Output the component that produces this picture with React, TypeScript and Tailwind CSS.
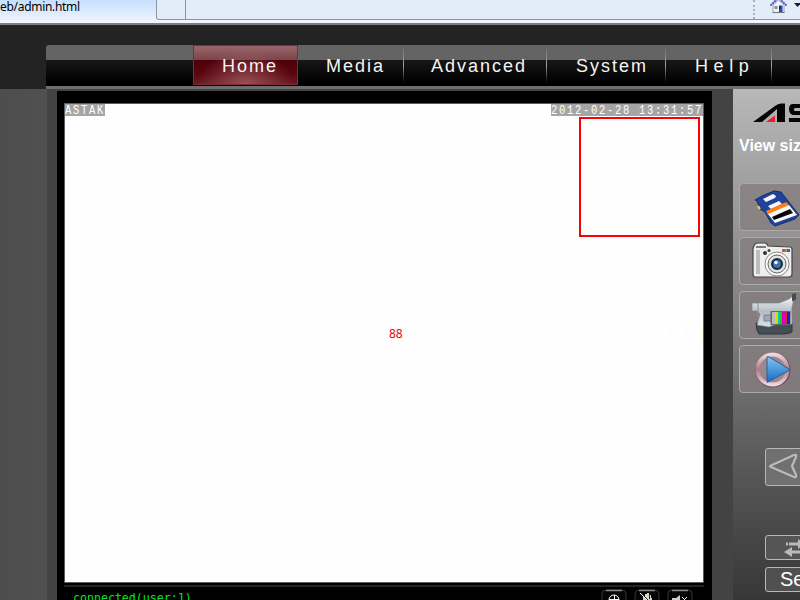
import React from "react";

const navItems = [
  { label: "Home", box: "w-[105px] pl-[29px] tracking-[2px]", active: true },
  { label: "Media", box: "w-[106px] pl-[28px] tracking-[2px]", active: false },
  { label: "Advanced", box: "w-[143px] pl-[27px] tracking-[2px]", active: false },
  { label: "System", box: "w-[119px] pl-[29px] tracking-[2px]", active: false },
  { label: "Help", box: "w-[106px] pl-[29px] tracking-[5.6px]", active: false },
];

function HomeIcon() {
  return (
    <svg className="ml-[15px] h-[14px] w-[17px] shrink-0" viewBox="0 0 17 14">
      <path d="M3 5 8.5 0 14 5v7.5H3z" fill="#eef0f5" stroke="#9aa3b5" />
      <path d="M.5 5.5 7-.8M16.5 5.5 10-.8" stroke="#3542c5" strokeWidth="1.6" strokeDasharray="2 .6" fill="none" />
      <path d="M2.5 12.5h12" stroke="#777" />
      <rect x="4.5" y="6" width="3" height="3" fill="#8b8f98" />
      <rect x="9" y="5.5" width="3.5" height="6.5" fill="#1c4fae" />
      <rect x="9" y="6" width="1.5" height="3" fill="#0a2460" />
    </svg>
  );
}

function BrowserBar() {
  return (
    <header className="flex h-[25px] shrink-0 flex-col border-b-2 border-[#7b7d80] bg-[#f2f5fb]">
      <div className="flex h-[20px]">
        <div className="h-[22px] w-[156px] shrink-0 bg-linear-to-b from-[#c6dffc] to-[#f0f4fc] font-['Noto_Sans',sans-serif] text-[12px] leading-[14px] text-black">
          <span className="block whitespace-nowrap tracking-[-0.3px]">eb/admin.html</span>
        </div>
        <div className="w-[30px] shrink-0 rounded-bl-[3px] border-r border-b border-l border-[#8c93a8] bg-[#e1edf9]" />
        <div className="flex min-w-0 flex-1 border-b border-[#8c93a8] bg-[#e1edf9]">
          <div className="ml-[567px] w-[2px] shrink-0 border-l-2 border-dotted border-[#a9b0bc]" />
          <HomeIcon />
          <svg className="mt-[3px] ml-[7px] h-[4px] w-[7px] shrink-0" viewBox="0 0 7 4"><path d="M0 0h7L3.5 4z" fill="#222" /></svg>
        </div>
      </div>
    </header>
  );
}

function Divider() {
  return <i className="h-[38px] w-px bg-linear-to-b from-[#666]/0 via-[#a4a4a4] to-[#222]/0" />;
}

function NavBar() {
  return (
    <nav className="ml-[46px] flex h-[44px] shrink-0 rounded-tl-[3px] border-b-[3px] border-[#6e6e6e] bg-[linear-gradient(#646464_0_15px,#171717_15px,#000_38px)] font-['Liberation_Sans',Arial,sans-serif] text-[18px] text-[#f4f4f4]">
      <div className="w-[147px]" />
      {navItems.map((item) => (
        <div key={item.label} className={`flex h-[40px] shrink-0 items-start justify-between whitespace-nowrap ${item.box} ${item.active ? "border border-[#812b35] bg-[radial-gradient(ellipse_at_bottom,#b06a70aa_0,#7d303600_65%),linear-gradient(#9b666b_0,#79454a_14px,#4d0009_14px,#5a0610_28px,#6d1c24_39px)]" : ""}`}>
          <span className={item.active ? "-ml-px pt-[9px] leading-[22px]" : "pt-[10px] leading-[22px]"}>{item.label}</span>
          {!item.active && <Divider />}
        </div>
      ))}
      <div className="flex-1" />
    </nav>
  );
}

function StatusBar() {
  return (
    <div className="mt-[2px] flex h-[15px] w-[640px] items-start border-t-2 border-[#242424]">
      <span className="ml-[9px] pt-[4px] font-['DejaVu_Sans_Mono',monospace] text-[11.6px] leading-[14px] text-[#00e817]">connected(user:1)</span>
      <div className="ml-auto flex gap-[7px] pt-[2px] pr-[11px]">
        <svg className="h-[13px] w-[26px]" viewBox="0 0 26 13">
          <path d="M1 13V5q0-4 4-4h16q4 0 4 4v8" fill="#050505" stroke="#353535" />
          <path d="M5 1.5h16" stroke="#888" strokeWidth="1.5" />
          <circle cx="13" cy="11" r="5" fill="none" stroke="#fff" /><path d="M13.5 6v7M8 10.5h10" stroke="#fff" />
        </svg>
        <svg className="h-[13px] w-[26px]" viewBox="0 0 26 13">
          <path d="M1 13V5q0-4 4-4h16q4 0 4 4v8" fill="#050505" stroke="#353535" />
          <path d="M5 1.5h16" stroke="#888" strokeWidth="1.5" />
          <path d="M9 13V7h2V5h2v3-4h2v4-2h2v3h1v4z" fill="#d9d9cb" /><path d="m6 4 9 9" stroke="#fff" /><path d="m7 4 9 9M15.5 6v4" stroke="#222" />
        </svg>
        <svg className="h-[13px] w-[26px]" viewBox="0 0 26 13">
          <path d="M1 13V5q0-4 4-4h16q4 0 4 4v8" fill="#050505" stroke="#353535" />
          <path d="M5 1.5h16" stroke="#888" strokeWidth="1.5" />
          <path d="M5 9h4l4-3v7H5z" fill="#ccc" /><path d="m15 8 5 5m0-5-5 5" stroke="#fff" />
        </svg>
      </div>
    </div>
  );
}

function Caption({ children, width }: { children: string; width: string }) {
  return (
    <div className={`h-[12px] overflow-hidden bg-[#a5a5a5] ${width}`}>
      <span className="block origin-top scale-y-[1.28] leading-[10px] whitespace-nowrap">{children}</span>
    </div>
  );
}

function VideoPanel() {
  return (
    <section className="mt-[2px] ml-[10px] h-[509px] w-[655px] shrink-0 bg-black pt-[12px] pl-[7px]">
      <div className="relative h-[480px] w-[640px] border border-[#5c5c5c] bg-[#fefefe]">
        <div className="flex h-[13px] justify-between font-['Liberation_Mono',monospace] text-[10.5px] tracking-[1.7px] text-white">
          <Caption width="w-[40px]">ASTAK</Caption>
          <Caption width="w-[152px]">2012-02-28 13:31:57</Caption>
        </div>
        <div className="mr-[3px] ml-auto h-[120px] w-[121px] border-2 border-[#fb0007]" />
        <div className="mt-[88px] ml-[324px] font-['Noto_Sans',sans-serif] text-[12px] leading-[18px] text-[#f00008]">88</div>
        <div className="absolute top-[223px] right-0 flex h-[15px] gap-[14px]">
          <i className="w-[2px] bg-[#fffeee]" /><i className="w-[2px] bg-[#fffeea]" /><i className="w-[2px] bg-[#fffce0]" />
        </div>
      </div>
      <StatusBar />
    </section>
  );
}

function AstakLogo() {
  return (
    <svg className="ml-[20px] h-[20px] w-[47px]" viewBox="0 0 47 20">
      <path d="M0 19 22 3Q25 .5 28 .5h4V19h-8V6L9 19z" fill="#050505" />
      <path d="M13 19 22 12.5V19z" fill="#f4192b" />
      <path d="M50 1H40q-4 0-4 5t4 6h10v3H36v4h14V8h-8q-1 0-1-1.500T42 5h8z" fill="#050505" />
    </svg>
  );
}

function SdCard() {
  return (
    <svg className="h-full w-full" viewBox="0 0 60 46">
      <path d="m14 16 7-4 12-5 7 1 18 23-4 4-20 7-4-3-6-11-5-3-3-8z" fill="#20429a" stroke="#132f70" />
      <path d="m22 15 10-5 3 2-1 2-9 4zM27 22l11-5 3 3-11 5z" fill="#f8f9ff" />
      <path d="m25 27 20-9 3 3-21 10z" fill="#ff7d11" />
      <path d="m27 30 21-9 8 10-22 8z" fill="#f8f8f8" />
      <path d="m31 33 18-8 3 4-19 7z" fill="#070707" />
      <path d="m17 22 2 3" stroke="#f4d16d" strokeWidth="2" />
    </svg>
  );
}

function PhotoCamera() {
  return (
    <svg className="h-full w-full" viewBox="2 0 60 46">
      <path d="M14 10l2-4q1-1 3-1h7q2 0 3 3l22 1q2 0 2 2v25q0 3-3 3H16q-2 0-2-3z" fill="#eeeeed" stroke="#444" strokeWidth="1.2" />
      <path d="M17 12v24h4V12z" fill="#bdbdbd" />
      <path d="M17 9h10" stroke="#555" strokeWidth="1.3" />
      <path d="M43 11h3v3h-3z" fill="#e04a36" /><path d="M46 11h2v3h-2z" fill="#3ac551" /><path d="M48 11h3v3h-3z" fill="#6743dd" />
      <circle cx="26" cy="15" r="2" fill="#333" /><circle cx="30" cy="12.500" r="1.500" fill="#444" />
      <circle cx="38" cy="26" r="12" fill="#fafafa" stroke="#888" />
      <circle cx="38" cy="26" r="9" fill="#e3e3e3" stroke="#666" />
      <circle cx="38" cy="26" r="5" fill="#3e6fa6" stroke="#142944" strokeWidth="2" />
      <circle cx="37" cy="24.500" r="1.800" fill="#ecf6fb" />
    </svg>
  );
}

function VideoCamera() {
  return (
    <svg className="h-full w-full" viewBox="2 -2 60 46">
      <defs><linearGradient id="cameraBody" x2="0" y2="1"><stop stopColor="#f7fafd" /><stop offset=".5" stopColor="#b7bbc4" /><stop offset="1" stopColor="#dde4e9" /></linearGradient></defs>
      <path d="M17 29h36v9q-3 2-10 2H20q-3-4-3-11z" fill="#454d55" stroke="#33373d" />
      <path d="M13 9h27l10-4 4-3v8l-1 3v17l-18 1-5 2-12-2 3-11-3-3h-5z" fill="url(#cameraBody)" stroke="#7d848d" strokeWidth=".7" />
      <path d="M19 9v13" stroke="#8b9099" /><path d="M22 11h23" stroke="#c9ced5" />
      <path d="M25 21h7v6h-7z" fill="#a3a9b3" stroke="#7b828e" />
      <path d="M53 2V0l4-1v7l-4 1z" fill="#444b55" />
      <rect x="31.500" y="17" width="20" height="14" fill="#666" />
      <path d="M33 18h3v12h-3z" fill="#bbb" /><path d="M36 18h3v12h-3z" fill="#dcd800" /><path d="M39 18h2v12h-2z" fill="#00c6ce" />
      <path d="M41 18h2v12h-2z" fill="#16c925" /><path d="M43 18h3v12h-3z" fill="#d900bc" /><path d="M46 18h2v12h-2z" fill="#e02428" /><path d="M48 18h3v12h-3z" fill="#1721d5" />
    </svg>
  );
}

function PlayIcon() {
  return (
    <svg className="h-full w-full" viewBox="1 0 60 46">
      <defs>
        <linearGradient id="playFill" x2="0" y2="1"><stop stopColor="#8dc5ef" /><stop offset=".5" stopColor="#4a98dc" /><stop offset="1" stopColor="#1c6bbb" /></linearGradient>
        <linearGradient id="playRing" x2="0" y2="1"><stop stopColor="#f1d5dd" /><stop offset=".5" stopColor="#b07988" /><stop offset="1" stopColor="#f2d2dc" /></linearGradient>
      </defs>
      <circle cx="33" cy="24" r="16" fill="none" stroke="#665259" strokeWidth="3" />
      <circle cx="32.500" cy="23.500" r="15" fill="#98898c" stroke="url(#playRing)" strokeWidth="3.800" />
      <path d="M27 11q0-1 2 0l20 12q1 1-1 2L28 36q-1 1-1-1z" fill="url(#playFill)" stroke="#245f9c" />
    </svg>
  );
}

function SideButton({ children }: { children: React.ReactNode }) {
  return <button className="h-[48px] w-[64px] overflow-hidden rounded-[4px] border border-[#aaa] bg-[#857d7d]/80">{children}</button>;
}

function Sidebar() {
  return (
    <aside className="ml-[21px] h-[511px] w-[67px] shrink-0 overflow-hidden bg-linear-to-b from-[#b8b8b8] via-[#797979] to-[#373737] font-['Liberation_Sans',Arial,sans-serif]">
      <div className="h-[46px] pt-[14px]"><AstakLogo /></div>
      <div className="ml-[6px] h-[48px] text-[16px] leading-[21px] font-bold whitespace-nowrap text-white">View size</div>
      <div className="ml-[6px] flex flex-col gap-[6px]">
        <SideButton><SdCard /></SideButton>
        <SideButton><PhotoCamera /></SideButton>
        <SideButton><VideoCamera /></SideButton>
        <SideButton><PlayIcon /></SideButton>
      </div>
      <button className="mt-[55px] ml-[32px] block h-[38px] w-[45px] rounded-[3px] border border-[#b8b8b8] bg-[#707070]">
        <svg className="h-full w-full" viewBox="0 0 43 36"><path d="M5 16.500 28 6q3-1 2 2l-4 9 4 9q1 3-2 2L5 18q-2-1 0-1.500z" fill="none" stroke="#bbb" strokeWidth="2.200" /></svg>
      </button>
      <button className="mt-[49px] ml-[32px] block h-[25px] w-[45px] rounded-[3px] border border-[#b8b8b8] bg-[#555]">
        <svg className="h-full w-full" viewBox="0 0 43 23"><path d="M20 6.500h2v3h-2zM23 6.500h9V3l7 5-7 5V9.500h-9zM18 16l8-5v3.500h12v3H26V21z" fill="#bababa" /></svg>
      </button>
      <button className="mt-[7px] ml-[32px] block h-[25px] w-[60px] rounded-[3px] border border-[#b8b8b8] bg-[#505050] pl-[14px] text-left text-[20px] leading-[21px] text-white">Set</button>
    </aside>
  );
}

export default function App() {
  return (
    <div className="flex h-[600px] w-[800px] flex-col overflow-hidden bg-[#434343]">
      <BrowserBar />
      <div className="flex h-[64px] shrink-0 flex-col bg-[#232323] pt-[20px]"><NavBar /></div>
      <main className="flex h-[511px]">
        <div className="w-[47px] shrink-0 bg-linear-to-r from-[#4d4d4d] to-[#505050]" />
        <VideoPanel />
        <Sidebar />
      </main>
    </div>
  );
}
